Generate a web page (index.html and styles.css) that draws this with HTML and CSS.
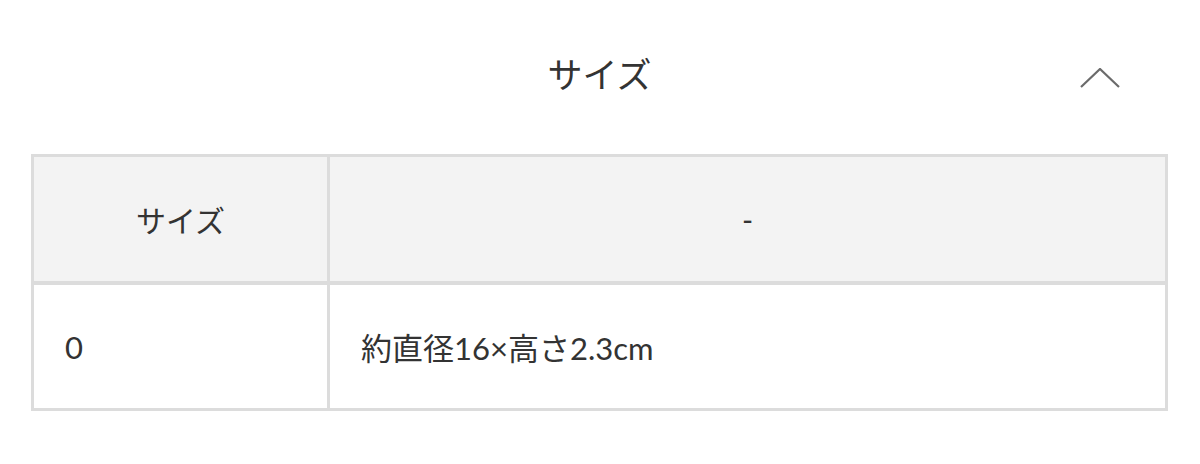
FILE: index.html
```html
<!DOCTYPE html>
<html lang="ja">
    <head>
        <meta charset="utf-8" />
        <link rel="stylesheet" href="styles.css">
    </head>
    <body>
        <div id="page-content">
            <div class="acc-header">
                <span></span>
                <h2 class="acc-title">サイズ</h2>
                <svg class="acc-chevron" width="40" height="20" viewBox="0 0 40 20">
                    <polyline points="1,19 20,1 39,19" fill="none" stroke="#6b6b6b" stroke-width="2.2" />
                </svg>
            </div>
            <div class="spec-table">
                <div class="cell head label">サイズ</div>
                <div class="cell head value">-</div>
                <div class="cell">0</div>
                <div class="cell">約直径16×高さ2.3cm</div>
            </div>
        </div>
    </body>
</html>
```

FILE: styles.css
```css
/* body props */
body {
    background-color:   #FFFFFF;
    color:              #333333;
    font-family:        Lato, "Noto Sans CJK JP", sans-serif;
    margin:             0;
}
#page-content {
    padding:            0 32px 0 31px;
}
.acc-header {
    display:            grid;
    grid-template-columns: 1fr auto 1fr;
    align-items:        center;
    height:             148px;
    margin-bottom:      6px;
}
.acc-title {
    margin:             0;
    font-size:          35px;
    font-weight:        normal;
    line-height:        1;
}
.acc-chevron {
    justify-self:       end;
    margin:             8px 48px 0 0;
}
.spec-table {
    display:            grid;
    grid-template-columns: 293px 1fr;
    grid-template-rows: 124px 123px;
    gap:                4px 3px;
    padding:            3px;
    background-color:   #dcdcdc;
}
.cell {
    background-color:   #FFFFFF;
    font-size:          31px;
    display:            flex;
    align-items:        center;
    padding-left:       31px;
}
.cell.head {
    background-color:   #f3f3f3;
    justify-content:    center;
    padding-left:       0;
    font-size:          30px;
}
```
